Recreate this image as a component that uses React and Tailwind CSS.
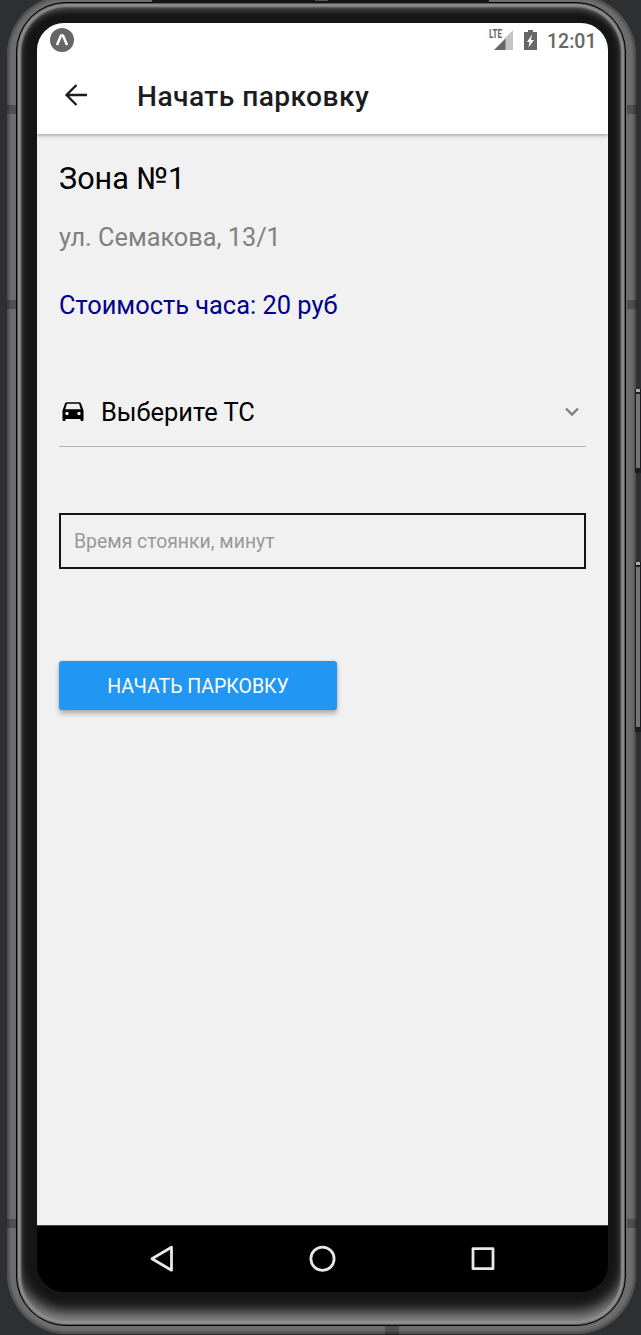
import React from "react";

function StatusBar() {
  return (
    <div className="flex h-[35px] items-center pl-[13px] pr-[12px] text-[#666]">
      <svg className="-mt-[2px]" width="24" height="24" viewBox="0 0 24 24">
        <circle cx="12" cy="12" r="12" fill="#666" />
        <path d="M7 17 11 7.5h2L17 17" fill="none" stroke="#fff" strokeWidth="2.5" strokeLinejoin="round" />
      </svg>
      <div className="ml-auto flex items-center">
        <div className="-mt-[2px] flex h-[20px] items-start">
          <span className="w-[13px] origin-left scale-x-[.68] text-[12px] leading-[9px] font-bold">LTE</span>
          <svg className="-ml-[8px]" width="19" height="20" viewBox="0 0 19 20">
            <path d="M9 10 19 0v20H11V9Z" fill="#c4c4c4" />
            <path d="M0 20 11.500 8.500v11.500Z" fill="#666" />
          </svg>
        </div>
        <svg className="-mt-[2px] ml-[11px]" width="13" height="20" viewBox="0 0 13 20">
          <path d="M4 0h5v2h4v18H0V2h4Z" fill="#666" />
          <path d="M8 4.500 3 12h2.500L4.500 17.500 10 10H7Z" fill="#fff" />
        </svg>
        <span className="ml-[10px] w-[49px] pt-[2px] text-[19.5px] leading-[24px] font-medium whitespace-nowrap">12:01</span>
      </div>
    </div>
  );
}

function Header() {
  return (
    <header className="z-10 h-[111px] shrink-0 bg-white shadow-[0_1px_4px_rgba(0,0,0,.4)]">
      <StatusBar />
      <div className="flex h-[76px] items-center pl-[27px]">
        <svg className="-mt-[2px]" width="24" height="24" viewBox="0 0 24 24" fill="none" stroke="#1c1c1e" strokeWidth="2.3">
          <path d="M12.5 2 2.5 12l10 10M2 12h21" />
        </svg>
        <h1 className="ml-[49px] pt-[2px] text-[28.2px] leading-[34px] font-medium tracking-[.42px] text-[#1c1c1e]">Начать парковку</h1>
      </div>
    </header>
  );
}

function NavBar() {
  return (
    <nav className="flex h-[67px] shrink-0 items-center border-t border-[#444] bg-black pl-[112px]">
      <svg width="346" height="28" viewBox="0 0 346 28" fill="none" stroke="#e8e8e8" strokeWidth="2.8" strokeLinejoin="round">
        <path d="M3 13.700 22.500 2.200v23Z" />
        <circle cx="173.500" cy="13.700" r="11.600" />
        <rect x="324" y="3.700" width="20" height="20" />
      </svg>
    </nav>
  );
}

function Screen() {
  return (
    <div className="flex h-full flex-col overflow-hidden rounded-[27px]">
      <Header />
      <main className="flex flex-1 flex-col bg-[#f1f1f1] px-[22px] pt-[26px]">
        <h2 className="text-[30.6px] leading-[38px] text-black">Зона №1</h2>
        <p className="mt-[24px] text-[25.3px] leading-[32px] text-[#808080]">ул. Семакова, 13/1</p>
        <p className="mt-[35px] text-[25.4px] leading-[32px] text-[#00008b]">Стоимость часа: 20 руб</p>
        <div className="mt-[57px] flex h-[69px] items-center border-b border-[#b4b4b4] pr-[6px] pl-[2px]">
          <svg width="24" height="22" viewBox="0 0 24 22">
            <path fillRule="evenodd" d="M4 2.500Q4.500 1.300 6 1.300h12q1.500 0 2 1.200l2.500 7V19q0 1-1 1h-1q-1 0-1-1v-1h-15v1q0 1-1 1H2.500q-1 0-1-1V9.500ZM6 2.800 4.200 8.300h15.600L18 2.800ZM6 10.800a1.700 1.700 0 1 0 0 3.400 1.700 1.700 0 0 0 0-3.400m12 0a1.700 1.700 0 1 0 0 3.400 1.700 1.700 0 0 0 0-3.400" />
          </svg>
          <span className="ml-[16px] text-[25.4px] leading-[32px] text-black">Выберите ТС</span>
          <svg className="-mt-[1px] ml-auto" width="16" height="12" viewBox="0 0 16 12" fill="none" stroke="#808080" strokeWidth="2.3">
            <path d="m2 2.500 6 6 6-6" />
          </svg>
        </div>
        <div className="mt-[66px] flex h-[56px] items-center border-2 border-[#141414] pt-[2px] pl-[13px] text-[19.4px] text-[#999]">
          Время стоянки, минут
        </div>
        <button className="mt-[92px] flex h-[49px] w-[278px] items-center justify-center rounded-[3px] bg-[#2196f3] pt-[3px] text-[19.5px] text-white shadow-[0_4px_5px_rgba(0,0,0,.25),0_0_3px_rgba(0,0,0,.15)]">
          НАЧАТЬ ПАРКОВКУ
        </button>
      </main>
      <NavBar />
    </div>
  );
}

function SideButton({ className }) {
  return (
    <div className={"absolute left-[635px] flex w-[6px] flex-col bg-[#1b1c1d] px-[1px] " + className}>
      <div className="h-[3px] bg-[#aaa]" />
      <div className="mt-[2px] mb-[5px] flex-1 bg-[#747474]" />
    </div>
  );
}

function Notch({ className }) {
  return <div className={"absolute h-[9px] bg-black/25 " + className} />;
}

export default function App() {
  return (
    <div className="relative h-[1335px] w-[641px] overflow-hidden bg-[#2d2f31] pl-[7px] font-['Roboto',sans-serif]">
      <div className="-mt-[5px] h-[1339px] w-[629px] rounded-[60px] bg-[#6d6d6d] pt-[7px] pl-[9px] shadow-[inset_0_0_3px_2px_#484848]">
        <div className="h-[1324px] w-[610px] rounded-[50px] border border-black bg-[#151515] pt-[20px] pr-[17px] pb-[33px] pl-[20px] shadow-[inset_0_0_1px_1px_#555,inset_0_0_2px_4px_#909090,inset_0_5px_6px_2px_#555,inset_0_-14px_13px_-1px_#888]">
          <Screen />
        </div>
      </div>
      <svg className="absolute top-[43px] left-[304px]" width="36" height="36" viewBox="0 0 36 36">
        <circle cx="18" cy="18" r="17" fill="#151515" />
        <circle cx="18" cy="18" r="11" fill="#202123" />
        <circle cx="18" cy="18" r="7.500" fill="#2c2e31" />
        <circle cx="18" cy="18" r="5.500" fill="#17191e" />
        <ellipse cx="14.500" cy="18" rx="1.300" ry="2" fill="#37777c" />
        <ellipse cx="21.500" cy="18" rx="1.300" ry="2" fill="#4058a5" />
      </svg>
      <SideButton className="top-[389px] h-[84px]" />
      <SideButton className="top-[562px] h-[170px]" />
      <Notch className="top-[105px] left-[7px] w-[9px]" />
      <Notch className="top-[105px] left-[627px] w-[9px]" />
      <Notch className="top-[300px] left-[7px] w-[9px]" />
      <Notch className="top-[300px] left-[627px] w-[9px]" />
      <Notch className="top-[1219px] left-[7px] w-[9px]" />
      <Notch className="top-[1219px] left-[627px] w-[9px]" />
      <Notch className="top-[1326px] left-[385px] w-[14px]" />
      <div className="absolute top-0 left-[152px] h-[3px] w-[337px] rounded-b bg-[#151515]" />
      <div className="absolute top-0 left-[315px] h-px w-[13px] bg-[#555]" />
    </div>
  );
}
